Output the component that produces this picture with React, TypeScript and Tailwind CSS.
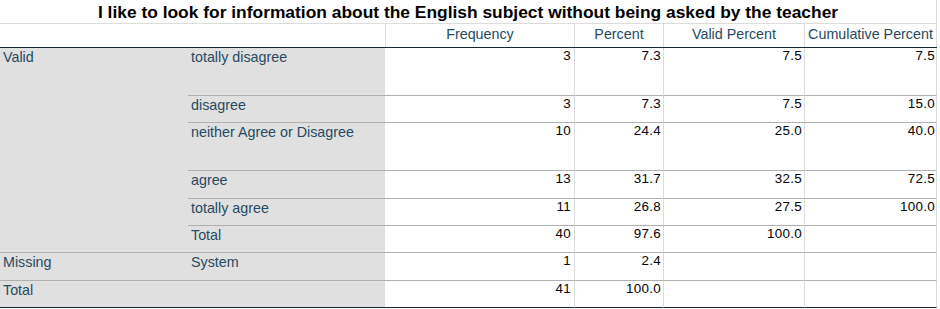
import React from 'react';

type Row = {
  group: string;
  label: string;
  h: string;
  values: string[];
  groupEnd: boolean;
  last?: boolean;
};

const ROWS: Row[] = [
  { group: 'Valid', label: 'totally disagree', h: 'h-[48px]', values: ['3', '7.3', '7.5', '7.5'], groupEnd: false },
  { group: '', label: 'disagree', h: 'h-[27px]', values: ['3', '7.3', '7.5', '15.0'], groupEnd: false },
  { group: '', label: 'neither Agree or Disagree', h: 'h-[48px]', values: ['10', '24.4', '25.0', '40.0'], groupEnd: false },
  { group: '', label: 'agree', h: 'h-[28px]', values: ['13', '31.7', '32.5', '72.5'], groupEnd: false },
  { group: '', label: 'totally agree', h: 'h-[27px]', values: ['11', '26.8', '27.5', '100.0'], groupEnd: false },
  { group: '', label: 'Total', h: 'h-[27px]', values: ['40', '97.6', '100.0', ''], groupEnd: true },
  { group: 'Missing', label: 'System', h: 'h-[28px]', values: ['1', '2.4', '', ''], groupEnd: true },
  { group: 'Total', label: '', h: 'h-[27px]', values: ['41', '100.0', '', ''], groupEnd: true, last: true },
];

const numCols = ['w-[190px] pr-[3px]', 'w-[89px] pr-[2px]', 'w-[141px] pr-[2px]', 'w-[132px] pr-[1px]'];

const App: React.FC = () => {
  return (
    <div className="w-[940px] h-[309px] bg-white font-['Liberation_Sans',Arial,sans-serif]">
      <div className="w-[937px]">
        <div className="h-[24px] border-b border-r border-[#dcdcdc] text-center text-[17.4px] font-bold leading-[20px] pt-[2px] text-black">
          I like to look for information about the English subject without being asked by the teacher
        </div>
        <div className="flex h-[24px] border-b border-[#152935] text-[14.3px] leading-[16px] text-[#264a60]">
          <div className="w-[385px]" />
          <div className="w-[189px] border-l border-[#dcdcdc] text-center pt-[2px]">Frequency</div>
          <div className="w-[89px] border-l border-[#dcdcdc] text-center pt-[2px]">Percent</div>
          <div className="w-[141px] border-l border-[#dcdcdc] text-center pt-[2px]">Valid Percent</div>
          <div className="w-[133px] border-l border-r border-[#dcdcdc] text-center pt-[2px]">Cumulative Percent</div>
        </div>
        {ROWS.map((row, i) => {
          const line = row.last ? 'border-[#152935]' : 'border-[#b0b0b0]';
          return (
            <div key={i} className={`flex ${row.h}`}>
              <div
                className={`w-[188px] shrink-0 bg-[#e0e0e0] pl-[3px] text-[14.3px] leading-[16px] pt-[1px] text-[#264a60] ${
                  row.groupEnd ? `border-b ${line}` : ''
                }`}
              >
                {row.group}
              </div>
              <div className={`w-[197px] shrink-0 bg-[#e0e0e0] border-b ${line} pl-[3px] text-[14.3px] leading-[16px] pt-[1px] text-[#264a60]`}>
                {row.label}
              </div>
              {row.values.map((v, j) => (
                <div
                  key={j}
                  className={`${numCols[j]} shrink-0 border-b ${line} border-r border-r-[#dcdcdc] text-right text-[13.4px] tracking-[0.3px] leading-[13px] pt-[1px] text-[#010205]`}
                >
                  {v}
                </div>
              ))}
            </div>
          );
        })}
      </div>
    </div>
  );
};

export default App;
